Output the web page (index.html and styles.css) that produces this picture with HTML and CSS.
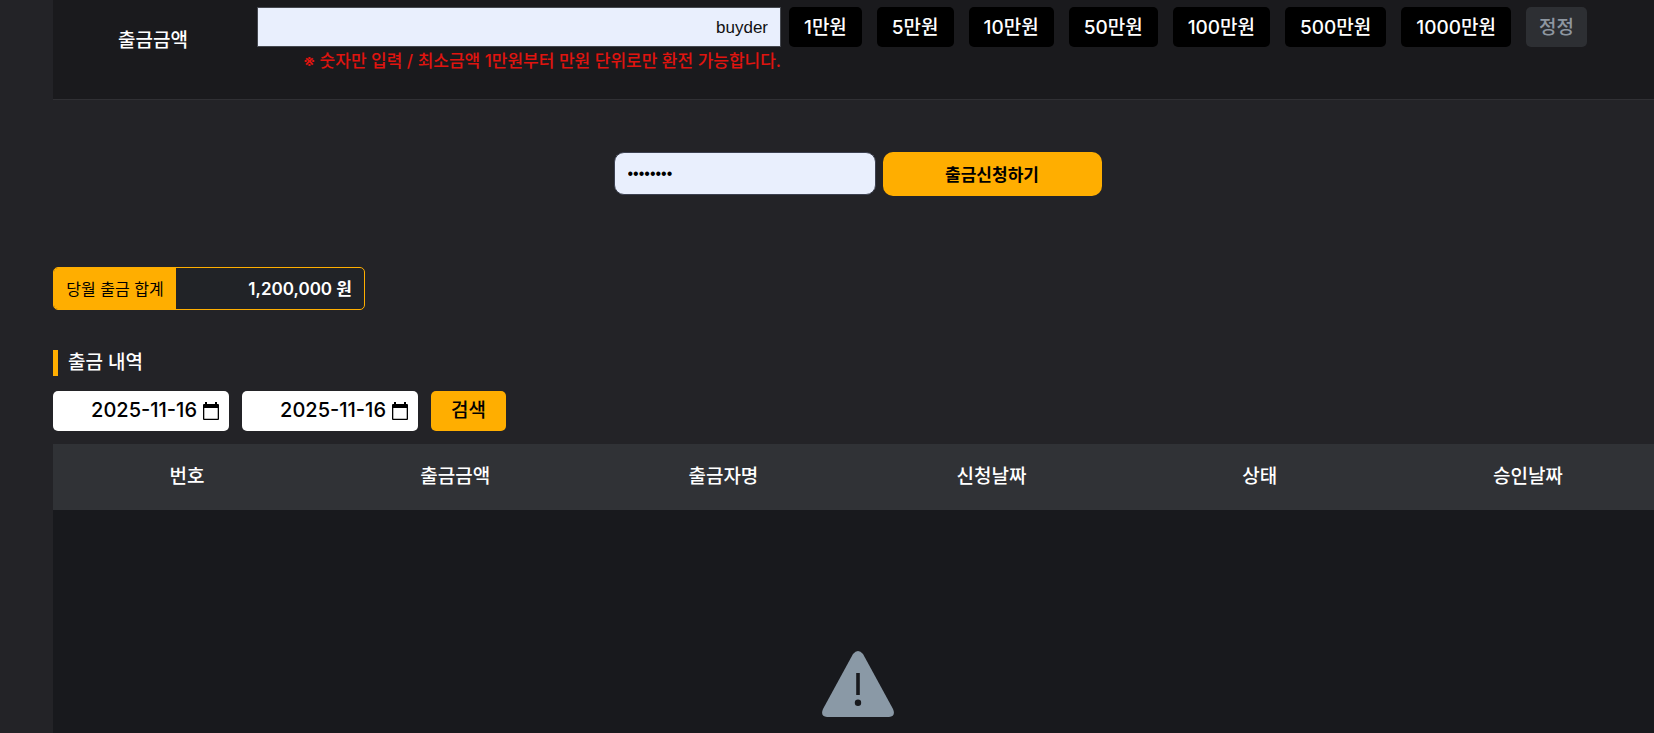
FILE: index.html
```html
<!DOCTYPE html>
<html lang="ko">
<head>
<meta charset="utf-8">
<title>출금신청</title>
<link rel="stylesheet" href="styles.css">
</head>
<body>
<main class="page">
  <form class="withdraw">
    <div class="amount-row">
      <label class="amount-label" for="amount">출금금액</label>
      <div class="amount-field">
        <input class="amount-input" id="amount" type="text" value="buyder">
        <p class="amount-note">※ 숫자만 입력 / 최소금액 1만원부터 만원 단위로만 환전 가능합니다.</p>
      </div>
      <div class="presets">
        <button class="preset" type="button">1만원</button>
        <button class="preset" type="button">5만원</button>
        <button class="preset" type="button">10만원</button>
        <button class="preset" type="button">50만원</button>
        <button class="preset" type="button">100만원</button>
        <button class="preset" type="button">500만원</button>
        <button class="preset" type="button">1000만원</button>
        <button class="preset preset-reset" type="button">정정</button>
      </div>
    </div>
    <div class="confirm">
      <input class="password" type="password" value="password" aria-label="비밀번호">
      <button class="submit" type="button">출금신청하기</button>
    </div>
  </form>

  <div class="summary">
    <span class="summary-label">당월 출금 합계</span>
    <span class="summary-value">1,200,000 원</span>
  </div>

  <h2 class="title">출금 내역</h2>

  <form class="search">
    <div class="date">
      <input class="date-input" type="text" value="2025-11-16" aria-label="시작일">
      <svg class="date-icon" viewBox="0 0 16 18" aria-hidden="true"><path d="M2 0h2v2h8V0h2v2h1q1 0 1 1v14q0 1-1 1H1q-1 0-1-1V3q0-1 1-1h1zM1.300 6v10.700h13.400V6z" fill="#000" fill-rule="evenodd"/></svg>
    </div>
    <div class="date">
      <input class="date-input" type="text" value="2025-11-16" aria-label="종료일">
      <svg class="date-icon" viewBox="0 0 16 18" aria-hidden="true"><path d="M2 0h2v2h8V0h2v2h1q1 0 1 1v14q0 1-1 1H1q-1 0-1-1V3q0-1 1-1h1zM1.300 6v10.700h13.400V6z" fill="#000" fill-rule="evenodd"/></svg>
    </div>
    <button class="search-button" type="button">검색</button>
  </form>

  <table class="history">
    <thead>
      <tr><th>번호</th><th>출금금액</th><th>출금자명</th><th>신청날짜</th><th>상태</th><th>승인날짜</th></tr>
    </thead>
    <tbody>
      <tr>
        <td class="empty" colspan="6">
          <svg class="warning" viewBox="0 0 72 66" aria-hidden="true">
            <path d="M31 3Q36-3 41 3L71 58Q74 65 67 66H5Q-2 65 1 58Z" fill="#8a99a6"/>
            <path d="M34.200 22h3.600v22h-3.600z" fill="#18191d"/>
            <circle cx="36" cy="51.800" r="3.200" fill="#18191d"/>
          </svg>
        </td>
      </tr>
    </tbody>
  </table>
</main>
</body>
</html>
```
FILE: styles.css
```css
* {
  box-sizing: border-box;
}

body {
  margin: 0;
  overflow: hidden;
  background: #232327;
  color: #fff;
  font: 500 19px/26px Inter, "Noto Sans CJK KR", sans-serif;
}

input,
button {
  margin: 0;
  border: 0;
  font: inherit;
}

.page {
  margin: 0 -8px 0 53px;
}

.amount-row {
  display: flex;
  align-items: flex-start;
  height: 100px;
  padding-top: 7px;
  background: #1a1a1d;
  border-bottom: 1px solid #303034;
}

.amount-label {
  width: 204px;
  padding: 21px 4px 0 0;
  text-align: center;
}

.amount-field {
  width: 524px;
}

.amount-input {
  display: block;
  width: 100%;
  height: 40px;
  padding: 2px 12px 0;
  border: 1px solid #45484f;
  background: #e9effd;
  color: #111;
  font: 17px "Liberation Sans", Arial, sans-serif;
  text-align: right;
}

.amount-note {
  margin: 2px 0 0;
  color: #e0140f;
  font-size: 17px;
  font-weight: 500;
  line-height: 24px;
  text-align: right;
  white-space: nowrap;
}

.presets {
  display: flex;
  gap: 15px;
  margin-left: 8px;
}

.preset {
  height: 40px;
  padding: 2px 15px 0;
  border-radius: 5px;
  background: #000;
  color: #fff;
  white-space: nowrap;
}

.preset-reset {
  padding: 2px 13px 0;
  background: #2d2f33;
  color: #8d96a0;
}

.confirm {
  display: flex;
  justify-content: center;
  gap: 7px;
  padding: 52px 0 71px;
}

.password {
  width: 262px;
  height: 43px;
  padding: 0 13px;
  border: 1px solid #3d4150;
  border-radius: 10px;
  background: #e9effd;
  color: #000;
  font: 16px "Liberation Sans", Arial, sans-serif;
}

.submit {
  width: 219px;
  height: 44px;
  padding: 2px 0 0;
  border-radius: 10px;
  background: #ffae00;
  color: #000;
  font-size: 17px;
  font-weight: 700;
}

.summary {
  display: flex;
  width: 312px;
  height: 43px;
  overflow: hidden;
  border: 1px solid #ffae00;
  border-radius: 5px;
  background: #212327;
  font-size: 17px;
  line-height: 42px;
}

.summary-label {
  width: 122px;
  background: #ffae00;
  color: #000;
  font-weight: 400;
  font-size: 16px;
  text-align: center;
}

.summary-value {
  flex: 1;
  padding-right: 12px;
  font-weight: 600;
  text-align: right;
}

.title {
  margin: 40px 0 15px;
  padding-left: 10px;
  border-left: 5px solid #ffae00;
  font-size: 19px;
  font-weight: 500;
  line-height: 26px;
}

.search {
  display: flex;
  gap: 13px;
  margin-bottom: 13px;
}

.date {
  position: relative;
  width: 176px;
}

.date-input {
  width: 100%;
  height: 40px;
  padding: 0 32px 2px 10px;
  border-radius: 5px;
  background: #fff;
  color: #000;
  font-weight: 500;
  font-size: 20px;
  text-align: right;
}

.date-icon {
  position: absolute;
  top: 11px;
  right: 10px;
  width: 16px;
  height: 18px;
}

.search-button {
  width: 75px;
  height: 40px;
  border-radius: 5px;
  background: #ffae00;
  color: #000;
}

.history {
  width: 100%;
  border-collapse: collapse;
  table-layout: fixed;
}

.history th {
  height: 66px;
  padding: 0;
  background: #303236;
  font-weight: 500;
}

.empty {
  padding: 141px 0 16px;
  background: #18191d;
  text-align: center;
}

.warning {
  display: block;
  width: 72px;
  height: 66px;
  margin: 0 auto;
}
```
